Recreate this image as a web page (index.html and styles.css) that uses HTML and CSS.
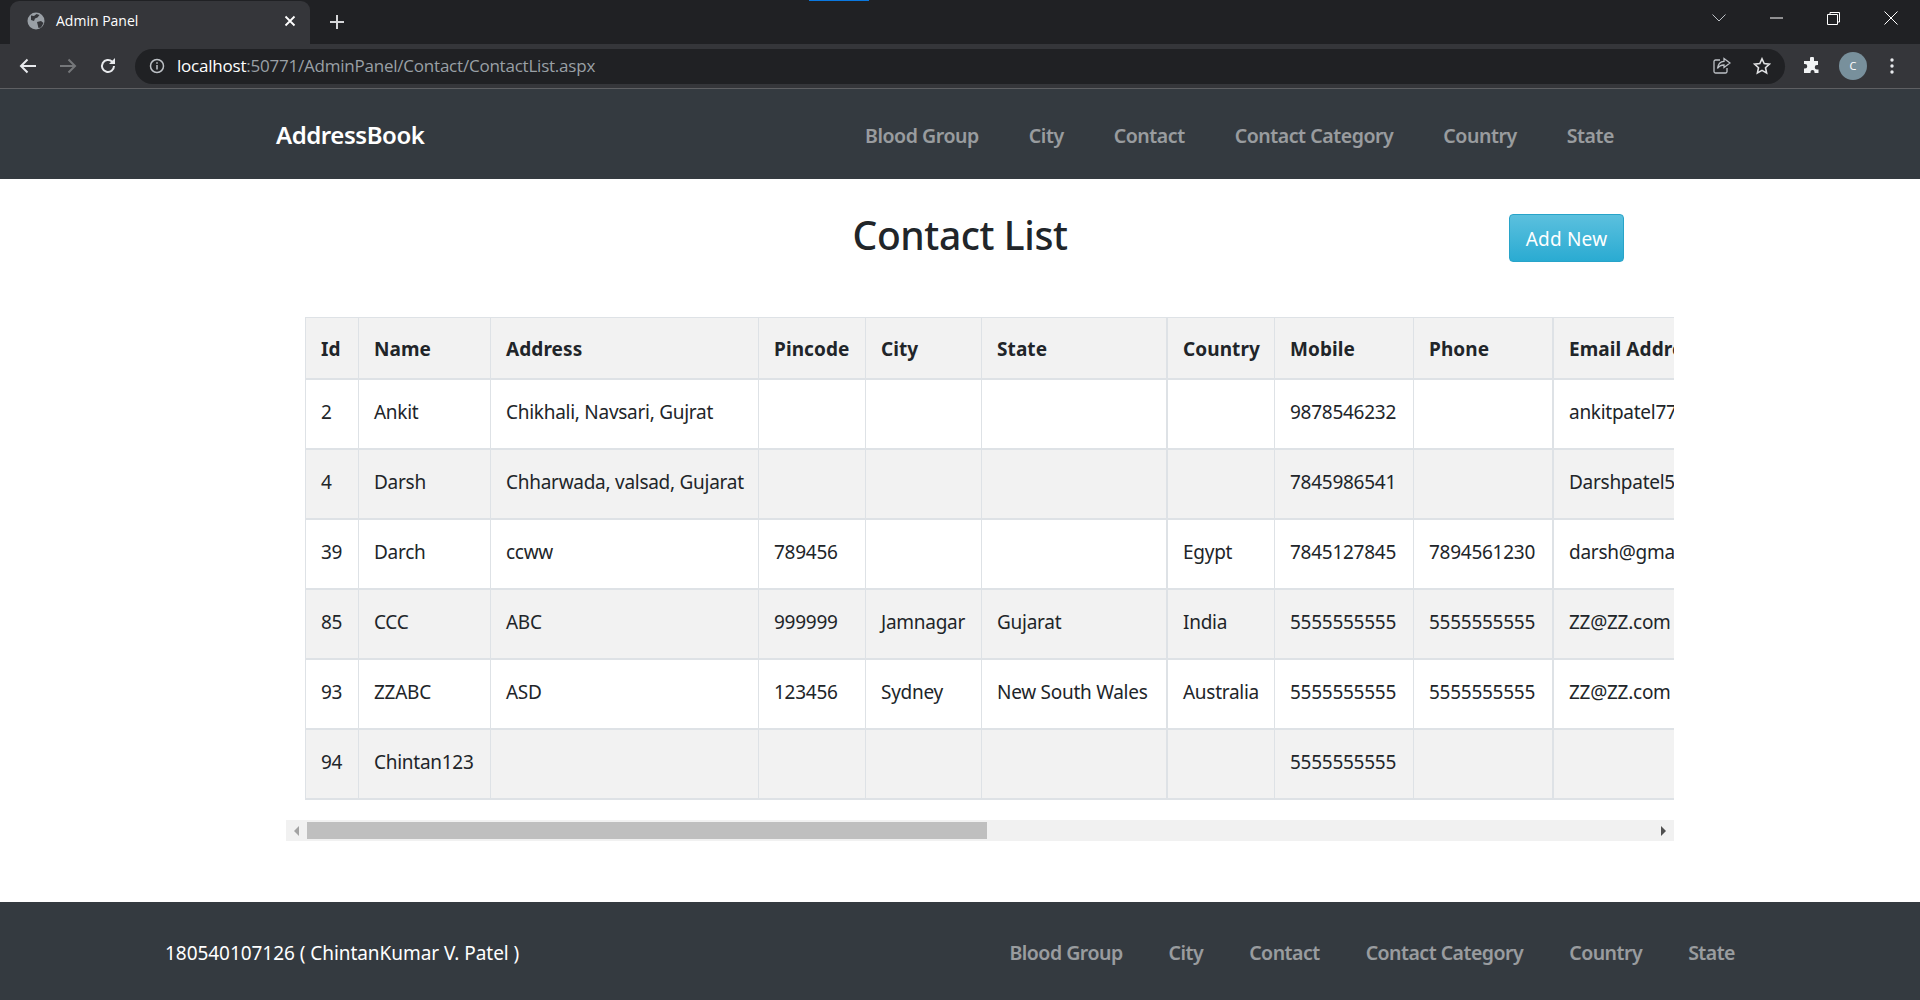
FILE: index.html
```html
<!DOCTYPE html>
<html>
<head lang="en">
    <meta charset="UTF-8">
    <title>Admin Panel</title>
    <link rel="stylesheet" href="styles.css">
</head>
<body>
<div id="chrome">
    <div class="tabstrip">
        <div class="tab">
            <svg class="globe" width="18" height="18" viewBox="0 0 18 18"><circle cx="9" cy="9" r="8.5" fill="#9aa0a6"/><path d="M4 3.500l3 .5 2.500-2 3 1-2 2.500-2.500 1-1 2.500-3-1zM10 10l4-1 2.500 2-2.500 4.500-2.500.5z" fill="#35363a"/></svg>
            <span class="tab-title">Admin Panel</span>
            <svg class="tab-close" width="12" height="12" viewBox="0 0 12 12"><path d="M1.500 1.500l9 9M10.500 1.500l-9 9" stroke="#fff" stroke-width="1.800"/></svg>
        </div>
        <svg class="new-tab" width="16" height="16" viewBox="0 0 16 16"><path d="M8 1v14M1 8h14" stroke="#d5d6d8" stroke-width="2"/></svg>
        <div class="win-btns">
            <svg width="14" height="8" viewBox="0 0 14 8"><path d="M.5.5L7 7 13.500.5" fill="none" stroke="#bdc1c6"/></svg>
            <svg width="13" height="2" viewBox="0 0 13 2"><path d="M0 1h13" stroke="#fff"/></svg>
            <svg width="13" height="13" viewBox="0 0 13 13"><path d="M3 2.500V.5h9.500V10H10.500M.5 2.500h10v10H.5z" fill="none" stroke="#fff"/></svg>
            <svg width="14" height="14" viewBox="0 0 14 14"><path d="M.5.5l13 13M13.500.5l-13 13" stroke="#fff"/></svg>
        </div>
    </div>
    <div class="toolbar">
        <svg class="tool" width="18" height="16" viewBox="0 0 18 16"><path d="M17 8H2M8.500 1.500L2 8l6.500 6.500" fill="none" stroke="#e8eaed" stroke-width="2"/></svg>
        <svg class="tool" width="18" height="16" viewBox="0 0 18 16"><path d="M1 8h15M9.500 1.500L16 8l-6.500 6.500" fill="none" stroke="#75777a" stroke-width="2"/></svg>
        <svg class="tool" width="18" height="18" viewBox="0 0 18 18"><path d="M15 9a6 6 0 1 1-1.800-4.300" fill="none" stroke="#e8eaed" stroke-width="2"/><path d="M16 1v6h-6z" fill="#e8eaed"/></svg>
        <div class="urlbar">
            <svg width="16" height="16" viewBox="0 0 16 16"><circle cx="8" cy="8" r="6.500" fill="none" stroke="#bdc1c6" stroke-width="1.500"/><path d="M8 7v4.500M8 4.200v1.600" stroke="#bdc1c6" stroke-width="1.500"/></svg>
            <span class="url"><span class="host">localhost</span>:50771/AdminPanel/Contact/ContactList.aspx</span>
            <svg class="share" width="18" height="18" viewBox="0 0 18 18"><path d="M7 3H2.500A1.500 1.500 0 0 0 1 4.500v10A1.500 1.500 0 0 0 2.500 16h10a1.500 1.500 0 0 0 1.500-1.500V11" fill="none" stroke="#bdc1c6" stroke-width="1.300"/><path d="M11 1.500l6 4.500-6 4.500V8c-3.500 0-5 1-6.500 3.500C5 7.500 7 4.500 11 4.300z" fill="none" stroke="#bdc1c6" stroke-width="1.300"/></svg>
            <svg class="star" width="18" height="18" viewBox="0 0 18 18"><path d="M9 1.800l2.200 4.800 5.200.6-3.900 3.500 1.100 5.200L9 13.300l-4.600 2.600 1.100-5.200L1.600 7.200l5.200-.6z" fill="none" stroke="#e0e1e3" stroke-width="1.600"/></svg>
        </div>
        <svg class="puzzle" width="18" height="18" viewBox="0 0 18 18"><path d="M7 1.500a2 2 0 0 1 4 0V4h4v4h-1a2.200 2.200 0 0 0 0 4.500h1.500V16h-4v-1a2 2 0 0 0-4 0v1H1v-4.500h1a2.200 2.200 0 0 0 0-4.500H1V4h6z" fill="#f1f3f4"/></svg>
        <div class="avatar">C</div>
        <svg class="dots" width="4" height="16" viewBox="0 0 4 16"><circle cx="2" cy="2" r="1.700" fill="#e8eaed"/><circle cx="2" cy="8" r="1.700" fill="#e8eaed"/><circle cx="2" cy="14" r="1.700" fill="#e8eaed"/></svg>
    </div>
</div>

<nav class="navbar">
    <a class="brand">AddressBook</a>
    <ul class="nav">
        <li>Blood Group</li>
        <li>City</li>
        <li>Contact</li>
        <li>Contact Category</li>
        <li>Country</li>
        <li>State</li>
    </ul>
</nav>

<div class="title-row">
    <h1>Contact List</h1>
    <a class="btn-add">Add New</a>
</div>

<div class="table-wrap">
    <table class="grid">
        <tr>
            <th>Id</th><th>Name</th><th>Address</th><th>Pincode</th><th>City</th><th>State</th><th>Country</th><th>Mobile</th><th>Phone</th><th>Email Address</th>
        </tr>
        <tr>
            <td>2</td><td>Ankit</td><td>Chikhali, Navsari, Gujrat</td><td></td><td></td><td></td><td></td><td>9878546232</td><td></td><td>ankitpatel7777@gmail.com</td>
        </tr>
        <tr>
            <td>4</td><td>Darsh</td><td>Chharwada, valsad, Gujarat</td><td></td><td></td><td></td><td></td><td>7845986541</td><td></td><td>Darshpatel5555@gmail.com</td>
        </tr>
        <tr>
            <td>39</td><td>Darch</td><td>ccww</td><td>789456</td><td></td><td></td><td>Egypt</td><td>7845127845</td><td>7894561230</td><td>darsh@gmail.com</td>
        </tr>
        <tr>
            <td>85</td><td>CCC</td><td>ABC</td><td>999999</td><td>Jamnagar</td><td>Gujarat</td><td>India</td><td>5555555555</td><td>5555555555</td><td>ZZ@ZZ.com</td>
        </tr>
        <tr>
            <td>93</td><td>ZZABC</td><td>ASD</td><td>123456</td><td>Sydney</td><td>New South Wales</td><td>Australia</td><td>5555555555</td><td>5555555555</td><td>ZZ@ZZ.com</td>
        </tr>
        <tr>
            <td>94</td><td>Chintan123</td><td></td><td></td><td></td><td></td><td></td><td>5555555555</td><td></td><td></td>
        </tr>
    </table>
</div>
<div class="hscroll">
    <span class="arrow-left"></span>
    <div class="thumb"></div>
    <span class="arrow-right"></span>
</div>

<footer class="footer">
    <span class="copy">180540107126 ( ChintanKumar V. Patel )</span>
    <ul class="foot-nav">
        <li>Blood Group</li>
        <li>City</li>
        <li>Contact</li>
        <li>Contact Category</li>
        <li>Country</li>
        <li>State</li>
    </ul>
</footer>
</body>
</html>
```

FILE: styles.css
```css
*{
    margin: 0;
    padding: 0;
    box-sizing: border-box;
}
ol,ul{
    list-style: none;
}
html,body{
    height: 1000px;
    overflow: hidden;
}
body{
    font-family: "Noto Sans", "Open Sans", sans-serif;
    font-size: 19px;
    color: #212529;
    background: #fff;
    display: flex;
    flex-direction: column;
}

/* browser frame */
#chrome{
    height: 89px;
    border-bottom: 1px solid #5f6063;
    background: #35363a;
    font-family: "Open Sans", sans-serif;
}
.tabstrip{
    height: 44px;
    background: #202124;
    display: flex;
    align-items: flex-end;
    padding-left: 10px;
    background-image: linear-gradient(#0a78e0, #0a78e0);
    background-size: 60px 1px;
    background-position: 809px 0;
    background-repeat: no-repeat;
}
.tab{
    width: 300px;
    height: 43px;
    background: #35363a;
    border-radius: 9px 9px 0 0;
    display: flex;
    align-items: center;
    padding: 0 14px 4px 17px;
    color: #fff;
    font-size: 14px;
}
.tab-title{
    margin-left: 11px;
    flex: 1;
}
.new-tab{
    margin: 0 0 14px 19px;
}
.win-btns{
    margin-left: auto;
    width: 186px;
    margin-right: 22px;
    height: 36px;
    align-self: flex-start;
    display: flex;
    justify-content: space-between;
    align-items: center;
}
.toolbar{
    height: 44px;
    display: flex;
    align-items: center;
    padding-left: 19px;
}
.tool{
    margin-right: 22px;
}
.urlbar{
    width: 1650px;
    height: 35px;
    margin-left: -4px;
    background: #202124;
    border-radius: 18px;
    display: flex;
    align-items: center;
    padding-left: 14px;
}
.url{
    margin-left: 12px;
    padding-bottom: 2px;
    font-size: 17px;
    letter-spacing: -.22px;
    color: #9aa0a6;
}
.host{
    color: #fff;
}
.share{
    margin-left: auto;
}
.star{
    margin: 0 14px 0 22px;
}
.puzzle{
    margin-left: 18px;
}
.avatar{
    width: 28px;
    height: 28px;
    margin-left: 18px;
    border-radius: 50%;
    background: #78909c;
    color: #fff;
    font-size: 11px;
    line-height: 28px;
    text-align: center;
}
.dots{
    margin-left: 23px;
}

/* site header */
.navbar{
    height: 90px;
    background: #343a40;
    display: flex;
    align-items: center;
    padding: 0 306px 0 276px;
}
.brand{
    color: #fff;
    font-size: 24px;
    font-weight: 600;
    letter-spacing: -.45px;
    padding-top: 1px;
}
.nav{
    margin-left: auto;
    display: flex;
    gap: 50px;
    padding-top: 3px;
    font-size: 19.5px;
    color: rgba(255,255,255,.5);
    font-weight: 600;
    letter-spacing: -.43px;
}

.title-row{
    height: 138px;
    display: grid;
    grid-template-columns: 1fr auto 1fr;
    padding-top: 31px;
}
.title-row h1{
    grid-column: 2;
    font-size: 39px;
    font-weight: 500;
    line-height: 50px;
    letter-spacing: -.4px;
}
.btn-add{
    grid-column: 3;
    justify-self: end;
    margin: 4px 296px 0 0;
    width: 115px;
    height: 48px;
    line-height: 48px;
    text-align: center;
    letter-spacing: .2px;
    color: #fff;
    border: 1px solid #28a4c9;
    border-radius: 4px;
    background: linear-gradient(#5bc0de, #2aabd2);
}

.table-wrap{
    margin-left: 286px;
    width: 1388px;
    padding-left: 19px;
    overflow: hidden;
}
.grid{
    border-collapse: separate;
    border-spacing: 0;
    table-layout: fixed;
    width: 1500px;
    letter-spacing: -.27px;
}
.grid th,.grid td{
    border-right: 1px solid #dee2e6;
    border-bottom: 2px solid #dee2e6;
    padding: 0 15px 4px;
    text-align: left;
    white-space: nowrap;
    overflow: hidden;
    height: 70px;
    font-weight: 400;
}
.grid th{
    height: 63px;
    padding: 2px 15px 0;
    font-weight: 700;
    letter-spacing: .08px;
    background: #f2f2f2;
    border-top: 1px solid #dee2e6;
}
.grid th:first-child,.grid td:first-child{
    border-left: 1px solid #dee2e6;
}
.grid th:nth-child(6),.grid td:nth-child(6),
.grid th:nth-child(9),.grid td:nth-child(9){
    border-right-width: 2px;
}
.grid tr:nth-child(odd) td{
    background: #f2f2f2;
}
.grid th:nth-child(1){ width: 54px; }
.grid th:nth-child(2){ width: 132px; }
.grid th:nth-child(3){ width: 268px; }
.grid th:nth-child(4){ width: 107px; }
.grid th:nth-child(5){ width: 116px; }
.grid th:nth-child(6){ width: 186px; }
.grid th:nth-child(7){ width: 107px; }
.grid th:nth-child(8){ width: 139px; }
.grid th:nth-child(9){ width: 140px; }
.grid th:nth-child(10){ width: 252px; }

.hscroll{
    margin: 20px 0 0 286px;
    width: 1388px;
    height: 21px;
    background: #f1f1f1;
    display: flex;
    align-items: center;
}
.arrow-left{
    width: 0;
    height: 0;
    margin-left: 8px;
    border: 5px solid transparent;
    border-left-width: 0;
    border-right-color: #a3a3a3;
}
.thumb{
    width: 680px;
    height: 17px;
    margin-left: 8px;
    background: #bfbfbf;
}
.arrow-right{
    width: 0;
    height: 0;
    margin: 0 8px 0 auto;
    border: 5px solid transparent;
    border-right-width: 0;
    border-left-color: #505050;
}

.footer{
    margin-top: auto;
    height: 98px;
    background: #343a40;
    display: flex;
    align-items: center;
    padding: 0 185px 0 165px;
    color: #fff;
}
.copy{
    padding-top: 3px;
    letter-spacing: -.05px;
}
.foot-nav{
    margin-left: auto;
    display: flex;
    gap: 46px;
    padding-top: 3px;
    font-size: 19.5px;
    color: rgba(255,255,255,.5);
    font-weight: 600;
    letter-spacing: -.5px;
}
```
